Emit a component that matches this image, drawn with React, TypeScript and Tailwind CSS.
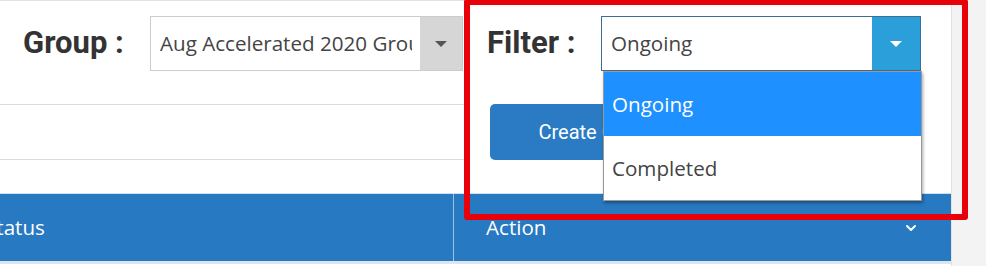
import { ChevronDown } from "lucide-react";

const Caret = ({ color }: { color: string }) => (
  <svg width="14" height="8" viewBox="0 0 14 8">
    <polygon points="1,1 13,1 7,7" fill={color} />
  </svg>
);

const App = () => {
  return (
    <div className="relative flex w-[986px] h-[266px] overflow-hidden bg-[#f3f3f3] font-['Open_Sans',sans-serif]">
      <div className="flex flex-col w-[952px] shrink-0 bg-white border-r border-t border-[#e2e2e2]">
        {/* filters area */}
        <div className="flex h-[192px]">
          <div className="flex flex-col w-[464px] shrink-0">
            <div className="flex items-start h-[104px] border-b border-[#dcdcdc] pt-[15px]">
              <span className="w-[150px] pl-[23px] pt-[7px] font-['Roboto',sans-serif] font-bold text-[31px] leading-[40px] text-[#333]">
                Group :
              </span>
              <div className="flex w-[313px] h-[55px] border border-[#cccccc] bg-white">
                <div className="flex-1 mr-[8px] overflow-hidden whitespace-nowrap pl-[9px] text-[20.6px] leading-[53px] text-[#444]">
                  Aug Accelerated 2020 Group
                </div>
                <div className="flex items-center justify-center w-[42px] bg-[#d6d6d6]">
                  <Caret color="#555" />
                </div>
              </div>
            </div>
            <div className="h-[55px] border-b border-[#dcdcdc]" />
          </div>

          <div className="relative flex-1">
            <div className="flex items-start pt-[15px]">
              <span className="w-[137px] pl-[23px] pt-[7px] font-['Roboto',sans-serif] font-bold text-[31px] leading-[40px] text-[#333]">
                Filter :
              </span>
              <div className="relative flex w-[320px] h-[55px] border border-[#3f6d91] bg-white">
                <div className="flex-1 pl-[9px] text-[20.6px] leading-[53px] text-[#444]">
                  Ongoing
                </div>
                <div className="flex items-center justify-center w-[48px] bg-[#2a9fd9]">
                  <Caret color="#ffffff" />
                </div>
                {/* open dropdown list */}
                <div className="absolute left-[1px] top-[54px] z-10 w-[319px] bg-white border border-[#9a9a9a] shadow-[1px_2px_3px_rgba(0,0,0,0.35)]">
                  <div className="h-[64px] pl-[8px] bg-[#1e90ff] text-[20.6px] leading-[64px] text-white">
                    Ongoing
                  </div>
                  <div className="h-[64px] pl-[8px] text-[20.6px] leading-[64px] text-[#444]">
                    Completed
                  </div>
                </div>
              </div>
            </div>
            <div className="pl-[26px] pt-[33px]">
              <button className="w-[214px] h-[56px] rounded-[5px] bg-[#2a7bc4] font-['Roboto',sans-serif] text-[20px] text-white">
                Create Group
              </button>
            </div>
          </div>
        </div>

        {/* table header */}
        <div className="flex h-[71px] bg-[#2779c2] border-t border-[#cfe0f0] border-b-[3px] border-b-[#dbe6f0] text-white text-[20.6px]">
          <div className="flex items-center w-[454px] overflow-hidden border-r border-[#9cc0e3]">
            <span className="-ml-[15px]">Status</span>
          </div>
          <div className="flex flex-1 items-center justify-between pl-[32px] pr-[32px]">
            <span>Action</span>
            <ChevronDown size={16} strokeWidth={3} />
          </div>
        </div>
      </div>

      {/* highlight box */}
      <div className="absolute left-[464px] top-[-1px] z-20 w-[504px] h-[221px] rounded-[3px] border-[6px] border-[#e8000a]" />
    </div>
  );
};

export default App;
